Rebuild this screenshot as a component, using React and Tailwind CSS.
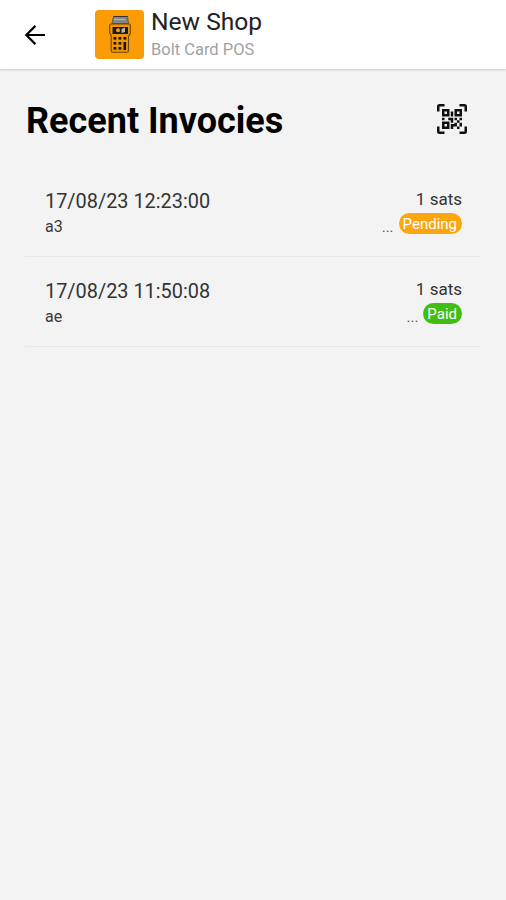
const invoices = [
  { id: 'a3', date: '17/08/23 12:23:00', amount: '1 sats', status: 'Pending' },
  { id: 'ae', date: '17/08/23 11:50:08', amount: '1 sats', status: 'Paid' },
]

function BackArrow() {
  return (
    <svg viewBox="0 0 24 24" className="w-[30px] h-[30px]" fill="none" stroke="#000" strokeWidth="1.700">
      <path d="M20 12H5M12.300 4.700L5 12l7.300 7.300" />
    </svg>
  )
}

function ShopLogo() {
  return (
    <div className="w-[49px] h-[49px] rounded-[4px] bg-[#fb9b05]">
      <svg viewBox="0 0 49 49" className="w-full h-full">
        {/* Paper slip */}
        <path d="M18.500 6.500h14l1 7h-16.500z" fill="#858585" stroke="#4c4840" strokeWidth="0.8" />
        <path d="M18.500 6.500h14" stroke="#333" strokeWidth="1" />
        <path d="M19 9.500h11" stroke="#b5b5b5" strokeWidth="1.200" />
        {/* Terminal body */}
        <path
          d="M16 14h18c.8 0 1.300 .6 1.300 1.500v8l-1.800 3v14c0 1-.6 1.800-1.600 1.800H17.800c-1 0-1.600-.8-1.600-1.800V26l-1.500-3v-7.500c0-.9.5-1.500 1.300-1.500z"
          fill="#ef950a"
          stroke="#6b460a"
          strokeWidth="1.100"
        />
        <rect x="17.500" y="17" width="15.500" height="7" fill="#201a14" />
        <circle cx="23" cy="20.200" r="2" fill="#f0a020" />
        <path d="M26.500 19l3.500 -1.500v4.500l-3.500 1z" fill="#b9b3a8" />
        {/* Keypad */}
        <g fill="#1d1507">
          <rect x="18.500" y="27" width="2.800" height="2.600" />
          <rect x="23.500" y="27" width="2.800" height="2.600" />
          <rect x="28.500" y="27" width="2.800" height="2.600" />
          <rect x="18.500" y="32" width="2.800" height="2.600" />
          <rect x="23.500" y="32" width="2.800" height="2.600" />
          <rect x="28.500" y="32" width="2.600" height="8" />
          <rect x="18.500" y="37" width="2.800" height="2.600" />
          <rect x="23.500" y="37" width="2.800" height="2.600" />
        </g>
      </svg>
    </div>
  )
}

function QrScanIcon() {
  return (
    <svg viewBox="0 0 24 24" className="w-[30px] h-[30px]" fill="#111">
      <path d="M4,4H10V10H4V4M20,4V10H14V4H20M14,15H16V13H14V11H16V13H18V11H20V13H18V15H20V18H18V20H16V18H13V20H11V16H14V15M16,15V18H18V15H16M4,20V14H10V20H4M6,6V8H8V6H6M16,6V8H18V6H16M6,16V18H8V16H6M4,11H6V13H4V11M9,11H13V15H11V13H9V11M11,6H13V10H11V6M2,2V6H0V2A2,2 0 0,1 2,0H6V2H2M22,0A2,2 0 0,1 24,2V6H22V2H18V0H22M2,18V22H6V24H2A2,2 0 0,1 0,22V18H2M22,22V18H24V22A2,2 0 0,1 22,24H18V22H22Z" />
    </svg>
  )
}

function StatusBadge({ status }) {
  const color = status === 'Paid' ? 'bg-[#42be12]' : 'bg-[#fda60f]'
  return (
    <span className={`${color} h-[21px] rounded-full pr-[5px] pl-[4px] text-[15px] leading-[23px] text-white`}>
      {status}
    </span>
  )
}

export default function App() {
  return (
    <div className="min-h-screen bg-[#f3f3f3] font-['Roboto',sans-serif] text-black">
      {/* Header */}
      <header className="flex h-[69px] bg-white pl-5 shadow-[0_1px_2px_rgba(0,0,0,0.16)]">
        <button className="mt-5 h-[30px] w-[30px]" aria-label="Back">
          <BackArrow />
        </button>
        <div className="ml-[45px] mt-[10px] flex">
          <ShopLogo />
          <div className="ml-[7px]">
            <p className="text-[24.600px] leading-[24px] text-[#222]">New Shop</p>
            <p className="mt-[6px] text-[16.500px] leading-[20px] text-[#a2a2a2]">Bolt Card POS</p>
          </div>
        </div>
      </header>

      <main className="px-[25px]">
        <div className="flex justify-between pt-[29px] pr-[14px]">
          <h1 className="mt-px ml-px text-[36px] leading-[44px] font-bold">Recent Invocies</h1>
          <button className="mt-[6px] h-[30px]" aria-label="Scan">
            <QrScanIcon />
          </button>
        </div>

        {/* Invoice list */}
        <ul className="mt-[24px]">
          {invoices.map((item) => (
            <li key={item.id} className="flex h-[90px] justify-between border-b border-[#e8e8e8] pr-[19px] pl-5 pt-[22px]">
              <div>
                <p className="text-[19.900px] leading-[26px] text-[#333]">{item.date}</p>
                <p className="mt-px w-[17px] overflow-hidden text-[16px] leading-[22px] text-[#3a3a3a]">{item.id}</p>
              </div>
              <div className="flex flex-col items-end">
                <p className="text-[17px] leading-[21px] text-[#333]">{item.amount}</p>
                <div className="mt-[3px] flex gap-[5px]">
                  <span className="text-[15px] leading-[28px] text-[#555]">...</span>
                  <StatusBadge status={item.status} />
                </div>
              </div>
            </li>
          ))}
        </ul>
      </main>
    </div>
  )
}
